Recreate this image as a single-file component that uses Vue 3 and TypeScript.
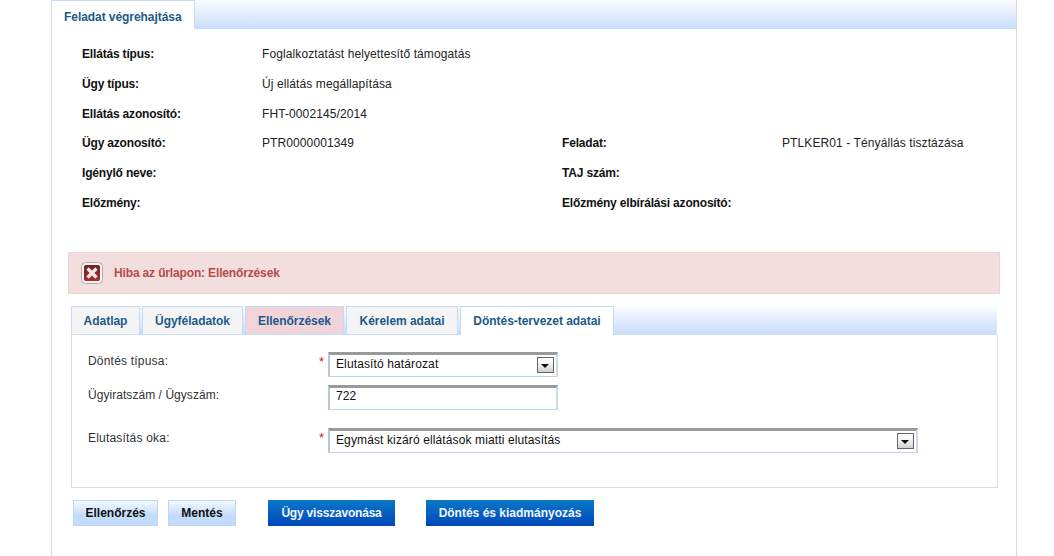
<script setup lang="ts">
const info: [string, string, string?, string?][] = [
  ['Ellátás típus:', 'Foglalkoztatást helyettesítő támogatás'],
  ['Ügy típus:', 'Új ellátás megállapítása'],
  ['Ellátás azonosító:', 'FHT-0002145/2014'],
  ['Ügy azonosító:', 'PTR0000001349', 'Feladat:', 'PTLKER01 - Tényállás tisztázása'],
  ['Igénylő neve:', '', 'TAJ szám:', ''],
  ['Előzmény:', '', 'Előzmény elbírálási azonosító:', ''],
]
const tabs = [
  { t: 'Adatlap', w: 69, c: '' },
  { t: 'Ügyféladatok', w: 101, c: '' },
  { t: 'Ellenőrzések', w: 99, c: 'err' },
  { t: 'Kérelem adatai', w: 112, c: '' },
  { t: 'Döntés-tervezet adatai', w: 154, c: 'on' },
]
</script>

<template>
  <div class="page">
    <div class="tabbar">
      <div class="maintab">Feladat végrehajtása</div>
    </div>
    <div class="info">
      <div v-for="r in info" :key="r[0]" class="row">
        <b class="c1">{{ r[0] }}</b>
        <span class="c2">{{ r[1] }}</span>
        <b class="c3">{{ r[2] }}</b>
        <span>{{ r[3] }}</span>
      </div>
    </div>
    <div class="error">
      <svg class="erricon" width="22" height="22" viewBox="0 0 22 22">
        <defs>
          <linearGradient id="errfill" x1="0" y1="0" x2="0" y2="1">
            <stop offset="0" stop-color="#6e2024" />
            <stop offset="1" stop-color="#a52e30" />
          </linearGradient>
        </defs>
        <rect x="0.5" y="0.5" width="21" height="21" rx="4" fill="#faf6f6" stroke="#b8a6a6" />
        <rect x="3" y="3" width="16" height="16" rx="2" fill="url(#errfill)" />
        <path d="M6.5 6.5 15.5 15.5M15.5 6.5 6.5 15.5" stroke="#efe6e6" stroke-width="3.4" />
      </svg>
      <span>Hiba az űrlapon: Ellenőrzések</span>
    </div>
    <div class="tabs">
      <div v-for="t in tabs" :key="t.t" class="tab" :class="t.c" :style="{ width: t.w + 'px' }">{{ t.t }}</div>
    </div>
    <div class="form">
      <div class="frow r1">
        <label>Döntés típusa:</label>
        <i>*</i>
        <div class="field sel w1">Elutasító határozat<span class="arrow"><em></em></span></div>
      </div>
      <div class="frow r2">
        <label>Ügyiratszám / Ügyszám:</label>
        <i></i>
        <div class="field w1">722</div>
      </div>
      <div class="frow r3">
        <label>Elutasítás oka:</label>
        <i>*</i>
        <div class="field sel w2">Egymást kizáró ellátások miatti elutasítás<span class="arrow"><em></em></span></div>
      </div>
    </div>
    <div class="buttons">
      <button class="light b1">Ellenőrzés</button>
      <button class="light b2">Mentés</button>
      <button class="blue b3">Ügy visszavonása</button>
      <button class="blue b4">Döntés és kiadmányozás</button>
    </div>
  </div>
</template>

<style scoped>
.page {
  box-sizing: border-box;
  width: 966px;
  height: 556px;
  margin-left: 51px;
  border-left: 1px solid #d8d8d8;
  border-right: 1px solid #d8d8d8;
  font: 12px "Liberation Sans", Arial, sans-serif;
  color: #222;
  overflow: hidden;
}
.tabbar {
  height: 29px;
  background: linear-gradient(#fafcff, #c7dcfb);
}
.maintab {
  box-sizing: border-box;
  width: 144px;
  height: 29px;
  margin-left: -1px;
  padding: 9px 0 0 12px;
  background: #fff;
  border: 1px solid #c5daf6;
  border-bottom: 0;
  font-weight: bold;
  letter-spacing: -0.06px;
  color: #1c5a8a;
}
.info {
  padding: 10px 0 0 30px;
  height: 192px;
  box-sizing: border-box;
}
.row {
  display: flex;
  height: 29.8px;
  line-height: 30px;
  letter-spacing: 0.1px;
}
.row b { color: #111; letter-spacing: -0.18px; }
.c1 { width: 180px; }
.c2 { width: 300px; }
.c3 { width: 220px; }
.error {
  box-sizing: border-box;
  display: flex;
  align-items: center;
  width: 932px;
  height: 42px;
  margin: 31px 0 0 16px;
  padding-left: 12px;
  background: #f2dede;
  border: 1px solid #eed3d7;
  font-weight: bold;
  letter-spacing: -0.15px;
  color: #b94a48;
}
.erricon { margin-right: 11px; }
.tabs {
  display: flex;
  gap: 2px;
  width: 926px;
  height: 29px;
  margin: 12px 0 0 19px;
  background: linear-gradient(#fafcff, #c7dcfb);
}
.tab {
  box-sizing: border-box;
  flex: none;
  height: 29px;
  line-height: 28px;
  text-align: center;
  font-weight: bold;
  letter-spacing: -0.03px;
  color: #1c5a8a;
  background: #f4f4f4;
  border: 1px solid #c5daf6;
}
.tab.err { background: #f0d4da; }
.tab.on { background: #fff; border-bottom: 0; }
.form {
  box-sizing: border-box;
  width: 927px;
  height: 153px;
  margin-left: 19px;
  padding: 17px 0 0 16px;
  border: 1px solid #dcdcdc;
  border-top: 0;
}
.frow { display: flex; align-items: flex-start; color: #333; letter-spacing: 0.05px; }
.frow label { width: 231px; padding-top: 3px; }
.frow i { width: 9px; color: #e11; font-style: normal; font-size: 13px; line-height: 14px; padding-top: 3px; }
.r1 label { padding-top: 2px; letter-spacing: 0.2px; }
.r2 { margin-top: 8px; }
.r3 { margin-top: 18px; }
.r3 label { letter-spacing: 0.2px; }
.field {
  box-sizing: border-box;
  position: relative;
  height: 25px;
  padding: 2px 0 0 6px;
  border: 1px solid #bcd3f2;
  border-top: 3px solid #9a9a9a;
  border-left: 2px solid #b5c6de;
  border-right: 2px solid #cdd9ea;
  background: #fff;
  color: #111;
  line-height: 14px;
  letter-spacing: 0.12px;
}
.r2 .field { padding-top: 1px; }
.w1 { width: 230px; }
.w2 { width: 590px; }
.arrow {
  box-sizing: border-box;
  position: absolute;
  right: 2px;
  top: 2px;
  width: 17px;
  height: 16px;
  border: 1px solid #666;
  background: linear-gradient(#fafafa 30%, #d0d0d0);
}
.arrow em {
  position: absolute;
  left: 3px;
  top: 6px;
  border: 4px solid transparent;
  border-top: 4px solid #111;
  border-bottom: 0;
}
.buttons {
  display: flex;
  margin: 12px 0 0 21px;
}
button {
  box-sizing: border-box;
  height: 26px;
  padding: 0;
  font: bold 12px "Liberation Sans", Arial, sans-serif;
}
.light {
  background: linear-gradient(#f3f8fe, #c3dcfb 60%);
  border: 1px solid #bcd6f7;
  color: #111;
}
.blue {
  background: linear-gradient(#0a78c6, #0047bb);
  border: 0;
  color: #f2f6ff;
}
.b1 { width: 85px; }
.b2 { width: 68px; margin-left: 10px; }
.b3 { width: 127px; margin-left: 32px; letter-spacing: -0.2px; }
.b4 { width: 168px; margin-left: 31px; }
</style>
